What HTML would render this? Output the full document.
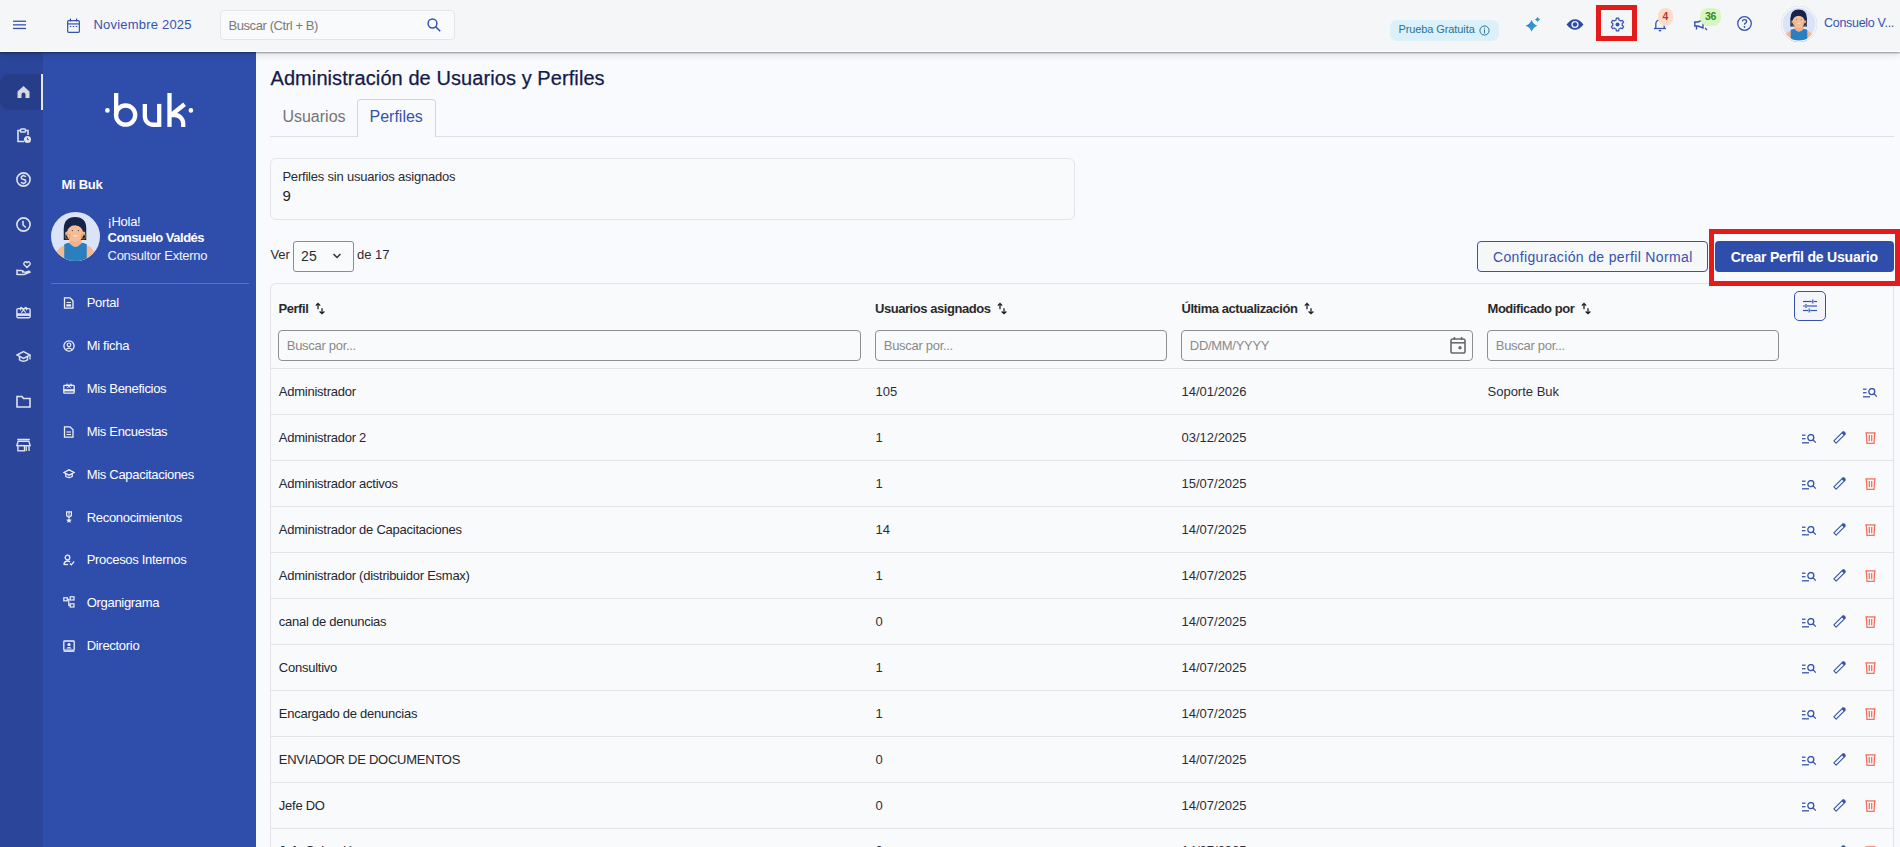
<!DOCTYPE html>
<html><head><meta charset="utf-8">
<style>
*{margin:0;padding:0;box-sizing:border-box}
html,body{width:1900px;height:847px;overflow:hidden;background:#f9fafd;font-family:"Liberation Sans",sans-serif;color:#1f2430}
.abs{position:absolute}
.t{position:absolute;white-space:nowrap;line-height:1}
#top{position:absolute;left:0;top:0;width:1900px;height:52px;background:#f5f6f7;border-bottom:1px solid #fff;box-shadow:0 1px 1.5px rgba(0,0,0,.38),0 3px 7px rgba(0,0,0,.10);z-index:5}
#rail{position:absolute;left:0;top:52px;width:43px;height:795px;background:#2a4599}
#side{position:absolute;left:43px;top:52px;width:213px;height:795px;background:#2f4eab}
#main{position:absolute;left:0;top:0;width:1900px;height:847px;overflow:hidden}
</style></head><body>
<div id="main">
<div class="t" style="left:270.50px;top:67.97px;font-size:20px;color:#141a4a;letter-spacing:0.08px;-webkit-text-stroke:0.25px #141a4a">Administración de Usuarios y Perfiles</div>
<div class="abs" style="left:270px;top:136px;width:1624px;height:1px;background:#dcdfe5"></div>
<div class="abs" style="left:357px;top:99px;width:79px;height:38px;border:1px solid #d3d6dc;border-bottom:none;border-radius:4px 4px 0 0;background:#f9fafc"></div>
<div class="t" style="left:282.40px;top:108.76px;font-size:16px;color:#747474">Usuarios</div>
<div class="t" style="left:369.50px;top:108.76px;font-size:16px;color:#3553ae">Perfiles</div>
<div class="abs" style="left:270px;top:158px;width:805px;height:62px;border:1px solid #e2e4e9;border-radius:6px;background:#f9fafc"></div>
<div class="t" style="left:282.40px;top:170.20px;font-size:13px;color:#2b2b33;letter-spacing:-0.2px">Perfiles sin usuarios asignados</div>
<div class="t" style="left:282.40px;top:187.90px;font-size:15px;color:#222">9</div>
<div class="t" style="left:270.40px;top:248.00px;font-size:13px;color:#2b2b33">Ver</div>
<div class="abs" style="left:293px;top:241px;width:61px;height:31px;border:1px solid #8c8c8c;border-radius:3px;background:#f9fafc"></div>
<div class="t" style="left:301.10px;top:248.95px;font-size:14px;color:#2b2b33">25</div>
<svg class="abs" style="left:332px;top:252px;" width="10" height="8" viewBox="0 0 10 8"><path d="M1.5 2 L5 5.5 L8.5 2" fill="none" stroke="#333" stroke-width="1.5"/></svg>
<div class="t" style="left:357.00px;top:248.00px;font-size:13px;color:#2b2b33">de 17</div>
<div class="abs" style="left:1477px;top:241px;width:231px;height:31px;border:1px solid #3553ae;border-radius:4px;background:#f6f7f9"></div>
<div class="t" style="left:1493.00px;top:249.85px;font-size:14px;color:#3553ae;letter-spacing:0.35px">Configuración de perfil Normal</div>
<div class="abs" style="left:1715px;top:241px;width:179px;height:31px;border-radius:4px;background:#2f4eab"></div>
<div class="t" style="left:1730.70px;top:250.15px;font-size:14px;color:#fff;font-weight:bold;letter-spacing:-0.2px">Crear Perfil de Usuario</div>
<div class="abs" style="left:270px;top:283px;width:1624px;height:600px;border:1px solid #e1e3e8;border-radius:6px;background:#f9fafc"></div>
<div class="t" style="left:278.50px;top:302.00px;font-size:13px;color:#2a2a2e;font-weight:bold;letter-spacing:-0.45px">Perfil</div>
<div class="t" style="left:875.00px;top:302.00px;font-size:13px;color:#2a2a2e;font-weight:bold;letter-spacing:-0.45px">Usuarios asignados</div>
<div class="t" style="left:1181.50px;top:302.00px;font-size:13px;color:#2a2a2e;font-weight:bold;letter-spacing:-0.45px">Última actualización</div>
<div class="t" style="left:1487.50px;top:302.00px;font-size:13px;color:#2a2a2e;font-weight:bold;letter-spacing:-0.45px">Modificado por</div>
<svg class="abs" style="left:315px;top:302px;" width="10" height="13" viewBox="0 0 10 13"><path d="M3 7.3 V1.4 M0.8 3.6 L3 1.4 L5.2 3.6" fill="none" stroke="#222" stroke-width="1.3"/><path d="M7 6.2 V11.6 M4.6 9.4 L7 11.6 L9.4 9.4" fill="none" stroke="#222" stroke-width="1.3"/></svg>
<svg class="abs" style="left:997px;top:302px;" width="10" height="13" viewBox="0 0 10 13"><path d="M3 7.3 V1.4 M0.8 3.6 L3 1.4 L5.2 3.6" fill="none" stroke="#222" stroke-width="1.3"/><path d="M7 6.2 V11.6 M4.6 9.4 L7 11.6 L9.4 9.4" fill="none" stroke="#222" stroke-width="1.3"/></svg>
<svg class="abs" style="left:1304px;top:302px;" width="10" height="13" viewBox="0 0 10 13"><path d="M3 7.3 V1.4 M0.8 3.6 L3 1.4 L5.2 3.6" fill="none" stroke="#222" stroke-width="1.3"/><path d="M7 6.2 V11.6 M4.6 9.4 L7 11.6 L9.4 9.4" fill="none" stroke="#222" stroke-width="1.3"/></svg>
<svg class="abs" style="left:1581px;top:302px;" width="10" height="13" viewBox="0 0 10 13"><path d="M3 7.3 V1.4 M0.8 3.6 L3 1.4 L5.2 3.6" fill="none" stroke="#222" stroke-width="1.3"/><path d="M7 6.2 V11.6 M4.6 9.4 L7 11.6 L9.4 9.4" fill="none" stroke="#222" stroke-width="1.3"/></svg>
<div class="abs" style="left:278px;top:330px;width:583px;height:31px;border:1px solid #8f8f8f;border-radius:4px;background:#f9fafc"></div>
<div class="t" style="left:286.80px;top:339.30px;font-size:13px;color:#8a8a8a;letter-spacing:-0.3px">Buscar por...</div>
<div class="abs" style="left:875px;top:330px;width:292px;height:31px;border:1px solid #8f8f8f;border-radius:4px;background:#f9fafc"></div>
<div class="t" style="left:883.80px;top:339.30px;font-size:13px;color:#8a8a8a;letter-spacing:-0.3px">Buscar por...</div>
<div class="abs" style="left:1181px;top:330px;width:292px;height:31px;border:1px solid #8f8f8f;border-radius:4px;background:#f9fafc"></div>
<div class="t" style="left:1189.80px;top:339.30px;font-size:13px;color:#8a8a8a;letter-spacing:-0.3px">DD/MM/YYYY</div>
<div class="abs" style="left:1487px;top:330px;width:292px;height:31px;border:1px solid #8f8f8f;border-radius:4px;background:#f9fafc"></div>
<div class="t" style="left:1495.80px;top:339.30px;font-size:13px;color:#8a8a8a;letter-spacing:-0.3px">Buscar por...</div>
<svg class="abs" style="left:1450px;top:336px;" width="16" height="18" viewBox="0 0 16 18"><rect x="1" y="3" width="14" height="14" rx="1.8" fill="none" stroke="#6a6a6a" stroke-width="1.6"/><line x1="1" y1="6.8" x2="15" y2="6.8" stroke="#6a6a6a" stroke-width="1.6"/><rect x="3.6" y="1" width="1.6" height="3" fill="#6a6a6a"/><rect x="10.8" y="1" width="1.6" height="3" fill="#6a6a6a"/><circle cx="10" cy="11.7" r="1.7" fill="#6a6a6a"/></svg>
<div class="abs" style="left:1794px;top:291px;width:32px;height:30px;border:1.5px solid #3553ae;border-radius:5px;background:#f4f5f8"></div>
<svg class="abs" style="left:1803px;top:299px;" width="14" height="14" viewBox="0 0 14 14"><g stroke="#3553ae" stroke-width="1.2" fill="none"><line x1="0" y1="2.5" x2="8.8" y2="2.5"/><line x1="10.8" y1="2.5" x2="14" y2="2.5"/><line x1="9.8" y1="0.6" x2="9.8" y2="4.4"/><line x1="0" y1="7" x2="2" y2="7"/><line x1="4" y1="7" x2="14" y2="7"/><line x1="3" y1="5.1" x2="3" y2="8.9"/><line x1="0" y1="11.5" x2="5.2" y2="11.5"/><line x1="7.2" y1="11.5" x2="14" y2="11.5"/><line x1="6.2" y1="9.6" x2="6.2" y2="13.4"/></g></svg>
<div class="abs" style="left:271px;top:368px;width:1622px;height:1px;background:#e3e5ea"></div>
<div class="t" style="left:278.80px;top:385.20px;font-size:13px;color:#25272f;letter-spacing:-0.25px">Administrador</div>
<div class="t" style="left:875.50px;top:385.20px;font-size:13px;color:#2b2d36">105</div>
<div class="t" style="left:1181.50px;top:385.20px;font-size:13px;color:#2b2d36">14/01/2026</div>
<div class="t" style="left:1487.50px;top:385.20px;font-size:13px;color:#2b2d36">Soporte Buk</div>
<div class="abs" style="left:271px;top:414px;width:1622px;height:1px;background:#e3e5ea"></div>
<svg class="abs" style="left:1863px;top:388px;" width="14" height="10" viewBox="0 0 14 10"><g fill="none" stroke="#3553ae" stroke-width="1.3"><line x1="0" y1="1.2" x2="3.5" y2="1.2"/><line x1="0" y1="4.7" x2="3.5" y2="4.7"/><line x1="0" y1="8.8" x2="7" y2="8.8"/><circle cx="8.8" cy="3.6" r="3"/><line x1="11" y1="5.8" x2="13.8" y2="8.6"/></g></svg>
<div class="t" style="left:278.80px;top:431.20px;font-size:13px;color:#25272f;letter-spacing:-0.25px">Administrador 2</div>
<div class="t" style="left:875.50px;top:431.20px;font-size:13px;color:#2b2d36">1</div>
<div class="t" style="left:1181.50px;top:431.20px;font-size:13px;color:#2b2d36">03/12/2025</div>
<div class="abs" style="left:271px;top:460px;width:1622px;height:1px;background:#e3e5ea"></div>
<svg class="abs" style="left:1802px;top:434px;" width="14" height="10" viewBox="0 0 14 10"><g fill="none" stroke="#3553ae" stroke-width="1.3"><line x1="0" y1="1.2" x2="3.5" y2="1.2"/><line x1="0" y1="4.7" x2="3.5" y2="4.7"/><line x1="0" y1="8.8" x2="7" y2="8.8"/><circle cx="8.8" cy="3.6" r="3"/><line x1="11" y1="5.8" x2="13.8" y2="8.6"/></g></svg>
<svg class="abs" style="left:1833px;top:431px;" width="13" height="13" viewBox="0 0 13 13"><path d="M0.87 9.87 L3.13 12.13 L12.13 3.13 L9.87 0.87 Z" fill="none" stroke="#3553ae" stroke-width="1.1" stroke-linejoin="round"/><path d="M8.6 2.1 L10.9 4.4 L12.4 2.9 Q13 2 12.2 1.1 L11.9 0.8 Q11 0 10.1 0.6 Z" fill="#3553ae"/></svg>
<svg class="abs" style="left:1865px;top:432px;" width="11" height="12" viewBox="0 0 11 12"><g fill="none" stroke="#f3705f" stroke-width="1.3"><path d="M0.4 0.9 H10.6"/><path d="M1.3 0.9 L2 11.4 H9 L9.7 0.9"/><line x1="4.3" y1="3" x2="4.3" y2="9.3"/><line x1="6.7" y1="3" x2="6.7" y2="9.3"/></g></svg>
<div class="t" style="left:278.80px;top:477.20px;font-size:13px;color:#25272f;letter-spacing:-0.25px">Administrador activos</div>
<div class="t" style="left:875.50px;top:477.20px;font-size:13px;color:#2b2d36">1</div>
<div class="t" style="left:1181.50px;top:477.20px;font-size:13px;color:#2b2d36">15/07/2025</div>
<div class="abs" style="left:271px;top:506px;width:1622px;height:1px;background:#e3e5ea"></div>
<svg class="abs" style="left:1802px;top:480px;" width="14" height="10" viewBox="0 0 14 10"><g fill="none" stroke="#3553ae" stroke-width="1.3"><line x1="0" y1="1.2" x2="3.5" y2="1.2"/><line x1="0" y1="4.7" x2="3.5" y2="4.7"/><line x1="0" y1="8.8" x2="7" y2="8.8"/><circle cx="8.8" cy="3.6" r="3"/><line x1="11" y1="5.8" x2="13.8" y2="8.6"/></g></svg>
<svg class="abs" style="left:1833px;top:477px;" width="13" height="13" viewBox="0 0 13 13"><path d="M0.87 9.87 L3.13 12.13 L12.13 3.13 L9.87 0.87 Z" fill="none" stroke="#3553ae" stroke-width="1.1" stroke-linejoin="round"/><path d="M8.6 2.1 L10.9 4.4 L12.4 2.9 Q13 2 12.2 1.1 L11.9 0.8 Q11 0 10.1 0.6 Z" fill="#3553ae"/></svg>
<svg class="abs" style="left:1865px;top:478px;" width="11" height="12" viewBox="0 0 11 12"><g fill="none" stroke="#f3705f" stroke-width="1.3"><path d="M0.4 0.9 H10.6"/><path d="M1.3 0.9 L2 11.4 H9 L9.7 0.9"/><line x1="4.3" y1="3" x2="4.3" y2="9.3"/><line x1="6.7" y1="3" x2="6.7" y2="9.3"/></g></svg>
<div class="t" style="left:278.80px;top:523.20px;font-size:13px;color:#25272f;letter-spacing:-0.25px">Administrador de Capacitaciones</div>
<div class="t" style="left:875.50px;top:523.20px;font-size:13px;color:#2b2d36">14</div>
<div class="t" style="left:1181.50px;top:523.20px;font-size:13px;color:#2b2d36">14/07/2025</div>
<div class="abs" style="left:271px;top:552px;width:1622px;height:1px;background:#e3e5ea"></div>
<svg class="abs" style="left:1802px;top:526px;" width="14" height="10" viewBox="0 0 14 10"><g fill="none" stroke="#3553ae" stroke-width="1.3"><line x1="0" y1="1.2" x2="3.5" y2="1.2"/><line x1="0" y1="4.7" x2="3.5" y2="4.7"/><line x1="0" y1="8.8" x2="7" y2="8.8"/><circle cx="8.8" cy="3.6" r="3"/><line x1="11" y1="5.8" x2="13.8" y2="8.6"/></g></svg>
<svg class="abs" style="left:1833px;top:523px;" width="13" height="13" viewBox="0 0 13 13"><path d="M0.87 9.87 L3.13 12.13 L12.13 3.13 L9.87 0.87 Z" fill="none" stroke="#3553ae" stroke-width="1.1" stroke-linejoin="round"/><path d="M8.6 2.1 L10.9 4.4 L12.4 2.9 Q13 2 12.2 1.1 L11.9 0.8 Q11 0 10.1 0.6 Z" fill="#3553ae"/></svg>
<svg class="abs" style="left:1865px;top:524px;" width="11" height="12" viewBox="0 0 11 12"><g fill="none" stroke="#f3705f" stroke-width="1.3"><path d="M0.4 0.9 H10.6"/><path d="M1.3 0.9 L2 11.4 H9 L9.7 0.9"/><line x1="4.3" y1="3" x2="4.3" y2="9.3"/><line x1="6.7" y1="3" x2="6.7" y2="9.3"/></g></svg>
<div class="t" style="left:278.80px;top:569.20px;font-size:13px;color:#25272f;letter-spacing:-0.25px">Administrador (distribuidor Esmax)</div>
<div class="t" style="left:875.50px;top:569.20px;font-size:13px;color:#2b2d36">1</div>
<div class="t" style="left:1181.50px;top:569.20px;font-size:13px;color:#2b2d36">14/07/2025</div>
<div class="abs" style="left:271px;top:598px;width:1622px;height:1px;background:#e3e5ea"></div>
<svg class="abs" style="left:1802px;top:572px;" width="14" height="10" viewBox="0 0 14 10"><g fill="none" stroke="#3553ae" stroke-width="1.3"><line x1="0" y1="1.2" x2="3.5" y2="1.2"/><line x1="0" y1="4.7" x2="3.5" y2="4.7"/><line x1="0" y1="8.8" x2="7" y2="8.8"/><circle cx="8.8" cy="3.6" r="3"/><line x1="11" y1="5.8" x2="13.8" y2="8.6"/></g></svg>
<svg class="abs" style="left:1833px;top:569px;" width="13" height="13" viewBox="0 0 13 13"><path d="M0.87 9.87 L3.13 12.13 L12.13 3.13 L9.87 0.87 Z" fill="none" stroke="#3553ae" stroke-width="1.1" stroke-linejoin="round"/><path d="M8.6 2.1 L10.9 4.4 L12.4 2.9 Q13 2 12.2 1.1 L11.9 0.8 Q11 0 10.1 0.6 Z" fill="#3553ae"/></svg>
<svg class="abs" style="left:1865px;top:570px;" width="11" height="12" viewBox="0 0 11 12"><g fill="none" stroke="#f3705f" stroke-width="1.3"><path d="M0.4 0.9 H10.6"/><path d="M1.3 0.9 L2 11.4 H9 L9.7 0.9"/><line x1="4.3" y1="3" x2="4.3" y2="9.3"/><line x1="6.7" y1="3" x2="6.7" y2="9.3"/></g></svg>
<div class="t" style="left:278.80px;top:615.20px;font-size:13px;color:#25272f;letter-spacing:-0.25px">canal de denuncias</div>
<div class="t" style="left:875.50px;top:615.20px;font-size:13px;color:#2b2d36">0</div>
<div class="t" style="left:1181.50px;top:615.20px;font-size:13px;color:#2b2d36">14/07/2025</div>
<div class="abs" style="left:271px;top:644px;width:1622px;height:1px;background:#e3e5ea"></div>
<svg class="abs" style="left:1802px;top:618px;" width="14" height="10" viewBox="0 0 14 10"><g fill="none" stroke="#3553ae" stroke-width="1.3"><line x1="0" y1="1.2" x2="3.5" y2="1.2"/><line x1="0" y1="4.7" x2="3.5" y2="4.7"/><line x1="0" y1="8.8" x2="7" y2="8.8"/><circle cx="8.8" cy="3.6" r="3"/><line x1="11" y1="5.8" x2="13.8" y2="8.6"/></g></svg>
<svg class="abs" style="left:1833px;top:615px;" width="13" height="13" viewBox="0 0 13 13"><path d="M0.87 9.87 L3.13 12.13 L12.13 3.13 L9.87 0.87 Z" fill="none" stroke="#3553ae" stroke-width="1.1" stroke-linejoin="round"/><path d="M8.6 2.1 L10.9 4.4 L12.4 2.9 Q13 2 12.2 1.1 L11.9 0.8 Q11 0 10.1 0.6 Z" fill="#3553ae"/></svg>
<svg class="abs" style="left:1865px;top:616px;" width="11" height="12" viewBox="0 0 11 12"><g fill="none" stroke="#f3705f" stroke-width="1.3"><path d="M0.4 0.9 H10.6"/><path d="M1.3 0.9 L2 11.4 H9 L9.7 0.9"/><line x1="4.3" y1="3" x2="4.3" y2="9.3"/><line x1="6.7" y1="3" x2="6.7" y2="9.3"/></g></svg>
<div class="t" style="left:278.80px;top:661.20px;font-size:13px;color:#25272f;letter-spacing:-0.25px">Consultivo</div>
<div class="t" style="left:875.50px;top:661.20px;font-size:13px;color:#2b2d36">1</div>
<div class="t" style="left:1181.50px;top:661.20px;font-size:13px;color:#2b2d36">14/07/2025</div>
<div class="abs" style="left:271px;top:690px;width:1622px;height:1px;background:#e3e5ea"></div>
<svg class="abs" style="left:1802px;top:664px;" width="14" height="10" viewBox="0 0 14 10"><g fill="none" stroke="#3553ae" stroke-width="1.3"><line x1="0" y1="1.2" x2="3.5" y2="1.2"/><line x1="0" y1="4.7" x2="3.5" y2="4.7"/><line x1="0" y1="8.8" x2="7" y2="8.8"/><circle cx="8.8" cy="3.6" r="3"/><line x1="11" y1="5.8" x2="13.8" y2="8.6"/></g></svg>
<svg class="abs" style="left:1833px;top:661px;" width="13" height="13" viewBox="0 0 13 13"><path d="M0.87 9.87 L3.13 12.13 L12.13 3.13 L9.87 0.87 Z" fill="none" stroke="#3553ae" stroke-width="1.1" stroke-linejoin="round"/><path d="M8.6 2.1 L10.9 4.4 L12.4 2.9 Q13 2 12.2 1.1 L11.9 0.8 Q11 0 10.1 0.6 Z" fill="#3553ae"/></svg>
<svg class="abs" style="left:1865px;top:662px;" width="11" height="12" viewBox="0 0 11 12"><g fill="none" stroke="#f3705f" stroke-width="1.3"><path d="M0.4 0.9 H10.6"/><path d="M1.3 0.9 L2 11.4 H9 L9.7 0.9"/><line x1="4.3" y1="3" x2="4.3" y2="9.3"/><line x1="6.7" y1="3" x2="6.7" y2="9.3"/></g></svg>
<div class="t" style="left:278.80px;top:707.20px;font-size:13px;color:#25272f;letter-spacing:-0.25px">Encargado de denuncias</div>
<div class="t" style="left:875.50px;top:707.20px;font-size:13px;color:#2b2d36">1</div>
<div class="t" style="left:1181.50px;top:707.20px;font-size:13px;color:#2b2d36">14/07/2025</div>
<div class="abs" style="left:271px;top:736px;width:1622px;height:1px;background:#e3e5ea"></div>
<svg class="abs" style="left:1802px;top:710px;" width="14" height="10" viewBox="0 0 14 10"><g fill="none" stroke="#3553ae" stroke-width="1.3"><line x1="0" y1="1.2" x2="3.5" y2="1.2"/><line x1="0" y1="4.7" x2="3.5" y2="4.7"/><line x1="0" y1="8.8" x2="7" y2="8.8"/><circle cx="8.8" cy="3.6" r="3"/><line x1="11" y1="5.8" x2="13.8" y2="8.6"/></g></svg>
<svg class="abs" style="left:1833px;top:707px;" width="13" height="13" viewBox="0 0 13 13"><path d="M0.87 9.87 L3.13 12.13 L12.13 3.13 L9.87 0.87 Z" fill="none" stroke="#3553ae" stroke-width="1.1" stroke-linejoin="round"/><path d="M8.6 2.1 L10.9 4.4 L12.4 2.9 Q13 2 12.2 1.1 L11.9 0.8 Q11 0 10.1 0.6 Z" fill="#3553ae"/></svg>
<svg class="abs" style="left:1865px;top:708px;" width="11" height="12" viewBox="0 0 11 12"><g fill="none" stroke="#f3705f" stroke-width="1.3"><path d="M0.4 0.9 H10.6"/><path d="M1.3 0.9 L2 11.4 H9 L9.7 0.9"/><line x1="4.3" y1="3" x2="4.3" y2="9.3"/><line x1="6.7" y1="3" x2="6.7" y2="9.3"/></g></svg>
<div class="t" style="left:278.80px;top:753.20px;font-size:13px;color:#25272f;letter-spacing:-0.25px">ENVIADOR DE DOCUMENTOS</div>
<div class="t" style="left:875.50px;top:753.20px;font-size:13px;color:#2b2d36">0</div>
<div class="t" style="left:1181.50px;top:753.20px;font-size:13px;color:#2b2d36">14/07/2025</div>
<div class="abs" style="left:271px;top:782px;width:1622px;height:1px;background:#e3e5ea"></div>
<svg class="abs" style="left:1802px;top:756px;" width="14" height="10" viewBox="0 0 14 10"><g fill="none" stroke="#3553ae" stroke-width="1.3"><line x1="0" y1="1.2" x2="3.5" y2="1.2"/><line x1="0" y1="4.7" x2="3.5" y2="4.7"/><line x1="0" y1="8.8" x2="7" y2="8.8"/><circle cx="8.8" cy="3.6" r="3"/><line x1="11" y1="5.8" x2="13.8" y2="8.6"/></g></svg>
<svg class="abs" style="left:1833px;top:753px;" width="13" height="13" viewBox="0 0 13 13"><path d="M0.87 9.87 L3.13 12.13 L12.13 3.13 L9.87 0.87 Z" fill="none" stroke="#3553ae" stroke-width="1.1" stroke-linejoin="round"/><path d="M8.6 2.1 L10.9 4.4 L12.4 2.9 Q13 2 12.2 1.1 L11.9 0.8 Q11 0 10.1 0.6 Z" fill="#3553ae"/></svg>
<svg class="abs" style="left:1865px;top:754px;" width="11" height="12" viewBox="0 0 11 12"><g fill="none" stroke="#f3705f" stroke-width="1.3"><path d="M0.4 0.9 H10.6"/><path d="M1.3 0.9 L2 11.4 H9 L9.7 0.9"/><line x1="4.3" y1="3" x2="4.3" y2="9.3"/><line x1="6.7" y1="3" x2="6.7" y2="9.3"/></g></svg>
<div class="t" style="left:278.80px;top:799.20px;font-size:13px;color:#25272f;letter-spacing:-0.25px">Jefe DO</div>
<div class="t" style="left:875.50px;top:799.20px;font-size:13px;color:#2b2d36">0</div>
<div class="t" style="left:1181.50px;top:799.20px;font-size:13px;color:#2b2d36">14/07/2025</div>
<div class="abs" style="left:271px;top:828px;width:1622px;height:1px;background:#e3e5ea"></div>
<svg class="abs" style="left:1802px;top:802px;" width="14" height="10" viewBox="0 0 14 10"><g fill="none" stroke="#3553ae" stroke-width="1.3"><line x1="0" y1="1.2" x2="3.5" y2="1.2"/><line x1="0" y1="4.7" x2="3.5" y2="4.7"/><line x1="0" y1="8.8" x2="7" y2="8.8"/><circle cx="8.8" cy="3.6" r="3"/><line x1="11" y1="5.8" x2="13.8" y2="8.6"/></g></svg>
<svg class="abs" style="left:1833px;top:799px;" width="13" height="13" viewBox="0 0 13 13"><path d="M0.87 9.87 L3.13 12.13 L12.13 3.13 L9.87 0.87 Z" fill="none" stroke="#3553ae" stroke-width="1.1" stroke-linejoin="round"/><path d="M8.6 2.1 L10.9 4.4 L12.4 2.9 Q13 2 12.2 1.1 L11.9 0.8 Q11 0 10.1 0.6 Z" fill="#3553ae"/></svg>
<svg class="abs" style="left:1865px;top:800px;" width="11" height="12" viewBox="0 0 11 12"><g fill="none" stroke="#f3705f" stroke-width="1.3"><path d="M0.4 0.9 H10.6"/><path d="M1.3 0.9 L2 11.4 H9 L9.7 0.9"/><line x1="4.3" y1="3" x2="4.3" y2="9.3"/><line x1="6.7" y1="3" x2="6.7" y2="9.3"/></g></svg>
<div class="t" style="left:278.80px;top:843.70px;font-size:13px;color:#25272f;letter-spacing:-0.25px">Jefe Selección</div>
<div class="t" style="left:875.50px;top:843.70px;font-size:13px;color:#2b2d36">0</div>
<div class="t" style="left:1181.50px;top:843.70px;font-size:13px;color:#2b2d36">14/07/2025</div>
<svg class="abs" style="left:1802px;top:848px;" width="14" height="10" viewBox="0 0 14 10"><g fill="none" stroke="#3553ae" stroke-width="1.3"><line x1="0" y1="1.2" x2="3.5" y2="1.2"/><line x1="0" y1="4.7" x2="3.5" y2="4.7"/><line x1="0" y1="8.8" x2="7" y2="8.8"/><circle cx="8.8" cy="3.6" r="3"/><line x1="11" y1="5.8" x2="13.8" y2="8.6"/></g></svg>
<svg class="abs" style="left:1833px;top:845px;" width="13" height="13" viewBox="0 0 13 13"><path d="M0.87 9.87 L3.13 12.13 L12.13 3.13 L9.87 0.87 Z" fill="none" stroke="#3553ae" stroke-width="1.1" stroke-linejoin="round"/><path d="M8.6 2.1 L10.9 4.4 L12.4 2.9 Q13 2 12.2 1.1 L11.9 0.8 Q11 0 10.1 0.6 Z" fill="#3553ae"/></svg>
<svg class="abs" style="left:1865px;top:846px;" width="11" height="12" viewBox="0 0 11 12"><g fill="none" stroke="#f3705f" stroke-width="1.3"><path d="M0.4 0.9 H10.6"/><path d="M1.3 0.9 L2 11.4 H9 L9.7 0.9"/><line x1="4.3" y1="3" x2="4.3" y2="9.3"/><line x1="6.7" y1="3" x2="6.7" y2="9.3"/></g></svg>
<div class="abs" style="left:1709px;top:229px;width:191px;height:57px;border:5px solid #e41b1b;border-right-width:5px"></div>
</div>
<div id="rail"></div>
<div id="side"></div>
<div id="sb" style="position:absolute;left:0;top:0">
<svg class="abs" style="left:100px;top:85px;" width="100" height="50" viewBox="0 0 100 50"><g fill="none" stroke="#fff" stroke-width="4.3"><path d="M16.15 8 V30.1"/><circle cx="25.6" cy="30.1" r="9.6"/><path d="M44.85 18.9 V31.2 A8.4 8.4 0 0 0 53.25 39.75 H59.2"/><path d="M59.2 18.9 V41.9"/><path d="M69.5 8 V41.9"/><path d="M70.5 30.5 L84.6 19.2"/><path d="M70 30 H74.6 A8.6 8.6 0 0 1 83.2 38.6 V41.9"/></g><circle cx="7.4" cy="25.4" r="2.3" fill="#fff"/><circle cx="90.9" cy="25.4" r="2.3" fill="#fff"/></svg>
<div class="t" style="left:61.50px;top:178.00px;font-size:13px;color:#fff;font-weight:bold;letter-spacing:-0.3px">Mi Buk</div>
<svg class="abs" style="left:51px;top:212px;" width="49" height="49" viewBox="0 0 100 100"><defs><clipPath id="c51"><circle cx="50" cy="50" r="50"/></clipPath></defs><g clip-path="url(#c51)"><rect width="100" height="100" fill="#dbe3f8"/><path d="M8 100 Q10 72 28 68 L72 68 Q90 72 92 100 Z" fill="#f3b994"/><rect x="38" y="52" width="24" height="18" fill="#f0b28c"/><path d="M27 100 L27 66 Q32 64 37 63 Q50 80 63 63 Q68 64 73 66 L73 100 Z" fill="#2a7fc2"/><path d="M26 57 L26 34 Q27 10 49 10 Q72 10 72 34 L72 57 Z" fill="#172448"/><ellipse cx="49" cy="44" rx="17" ry="17" fill="#f4bd98"/><ellipse cx="32" cy="44" rx="3" ry="4" fill="#f0b28c"/><ellipse cx="67" cy="44" rx="3" ry="4" fill="#f0b28c"/><path d="M30 34 Q36 24 48 26 Q60 28 68 34 L68 24 Q60 14 48 14 Q34 16 30 26 Z" fill="#172448"/><path d="M45 48 Q50 52 55 48 Z" fill="#fff"/><circle cx="43.5" cy="38" r="1.3" fill="#2f4a45"/><circle cx="56" cy="38" r="1.3" fill="#2f4a45"/><circle cx="34" cy="50" r="4.8" fill="none" stroke="#c9962e" stroke-width="1.3"/><circle cx="66" cy="50" r="4.8" fill="none" stroke="#c9962e" stroke-width="1.3"/></g></svg>
<div class="t" style="left:107.50px;top:214.50px;font-size:13px;color:#fff;letter-spacing:-0.3px">¡Hola!</div>
<div class="t" style="left:107.50px;top:231.00px;font-size:13px;color:#fff;font-weight:bold;letter-spacing:-0.5px">Consuelo Valdés</div>
<div class="t" style="left:107.50px;top:249.00px;font-size:13px;color:#f0f2fa;letter-spacing:-0.25px">Consultor Externo</div>
<div class="abs" style="left:51px;top:283px;width:198px;height:1px;background:#5a72bf"></div>
<div class="t" style="left:86.70px;top:296.30px;font-size:13px;color:#fff;letter-spacing:-0.3px">Portal</div>
<div class="t" style="left:86.70px;top:339.20px;font-size:13px;color:#fff;letter-spacing:-0.3px">Mi ficha</div>
<div class="t" style="left:86.70px;top:382.00px;font-size:13px;color:#fff;letter-spacing:-0.3px">Mis Beneficios</div>
<div class="t" style="left:86.70px;top:425.10px;font-size:13px;color:#fff;letter-spacing:-0.3px">Mis Encuestas</div>
<div class="t" style="left:86.70px;top:467.90px;font-size:13px;color:#fff;letter-spacing:-0.3px">Mis Capacitaciones</div>
<div class="t" style="left:86.70px;top:510.90px;font-size:13px;color:#fff;letter-spacing:-0.3px">Reconocimientos</div>
<div class="t" style="left:86.70px;top:553.00px;font-size:13px;color:#fff;letter-spacing:-0.3px">Procesos Internos</div>
<div class="t" style="left:86.70px;top:596.00px;font-size:13px;color:#fff;letter-spacing:-0.3px">Organigrama</div>
<div class="t" style="left:86.70px;top:639.20px;font-size:13px;color:#fff;letter-spacing:-0.3px">Directorio</div>
<svg class="abs" style="left:62.5px;top:297px;" width="12" height="12" viewBox="0 0 12 12"><path d="M1.5 0.8 H7 L10 3.8 V11.2 H1.5 Z" fill="none" stroke="#eef0f8" stroke-width="1.3"/><line x1="3.5" y1="5.5" x2="8" y2="5.5" stroke="#eef0f8" stroke-width="1.1"/><rect x="3.3" y="7.3" width="4.8" height="2.2" fill="#eef0f8"/></svg>
<svg class="abs" style="left:62.5px;top:340px;" width="12" height="12" viewBox="0 0 12 12"><circle cx="6" cy="6" r="5.1" fill="none" stroke="#eef0f8" stroke-width="1.3"/><circle cx="6" cy="4.8" r="1.8" fill="none" stroke="#eef0f8" stroke-width="1.2"/><path d="M2.8 9.6 Q6 6.8 9.2 9.6" fill="none" stroke="#eef0f8" stroke-width="1.2"/></svg>
<svg class="abs" style="left:62.5px;top:382px;" width="12" height="12" viewBox="0 0 12 12"><g fill="none" stroke="#eef0f8"><rect x="0.8" y="3.4" width="10.4" height="7.8" rx="0.8" stroke-width="1.3"/><path d="M6 4.6 C4.8 0.8 2.6 1.4 3.6 4.4 M6 4.6 C7.2 0.8 9.4 1.4 8.4 4.4 M6 4.2 L4.2 6.2 M6 4.2 L7.8 6.2" stroke-width="1"/></g><rect x="0.8" y="7.2" width="10.4" height="2.2" fill="#eef0f8"/></svg>
<svg class="abs" style="left:62.5px;top:426px;" width="12" height="12" viewBox="0 0 12 12"><path d="M1.5 0.8 H7 L10 3.8 V11.2 H1.5 Z" fill="none" stroke="#eef0f8" stroke-width="1.3"/><line x1="3.5" y1="6" x2="8" y2="6" stroke="#eef0f8" stroke-width="1.1"/><line x1="3.5" y1="8.5" x2="8" y2="8.5" stroke="#eef0f8" stroke-width="1.1"/></svg>
<svg class="abs" style="left:62.5px;top:468px;" width="12" height="12" viewBox="0 0 12 12"><path d="M0.8 4.5 L6 1.8 L11.2 4.5 L6 7.2 Z" fill="none" stroke="#eef0f8" stroke-width="1.3"/><path d="M2.8 5.8 V8.5 Q6 10.5 9.2 8.5 V5.8" fill="none" stroke="#eef0f8" stroke-width="1.3"/></svg>
<svg class="abs" style="left:62.5px;top:511px;" width="12" height="12" viewBox="0 0 12 12"><path d="M3.6 0.8 H8.4 V4.6 L6 6.4 L3.6 4.6 Z" fill="none" stroke="#eef0f8" stroke-width="1.2"/><line x1="6" y1="0.8" x2="6" y2="5.5" stroke="#eef0f8" stroke-width="1"/><path d="M6 6.8 L6.9 8.6 L8.8 8.8 L7.4 10 L7.8 11.8 L6 10.9 L4.2 11.8 L4.6 10 L3.2 8.8 L5.1 8.6 Z" fill="#eef0f8"/></svg>
<svg class="abs" style="left:62.5px;top:554px;" width="12" height="12" viewBox="0 0 12 12"><circle cx="4.5" cy="3.5" r="2.3" fill="none" stroke="#eef0f8" stroke-width="1.3"/><path d="M0.8 10.5 Q1.5 7 4.5 7 Q6 7 7 8" fill="none" stroke="#eef0f8" stroke-width="1.3"/><line x1="0.8" y1="10.5" x2="5" y2="10.5" stroke="#eef0f8" stroke-width="1.3"/><path d="M7 9.5 L8.3 10.8 L11.2 7.5" fill="none" stroke="#eef0f8" stroke-width="1.2"/></svg>
<svg class="abs" style="left:62.5px;top:596px;" width="12" height="12" viewBox="0 0 12 12"><rect x="0.8" y="1.8" width="3.5" height="3" fill="none" stroke="#eef0f8" stroke-width="1.2"/><rect x="7.2" y="0.8" width="3.8" height="3.2" fill="none" stroke="#eef0f8" stroke-width="1.2"/><rect x="7.2" y="7.8" width="3.8" height="3.2" fill="none" stroke="#eef0f8" stroke-width="1.2"/><path d="M4.3 3.3 H5.8 V9.4 H7.2" fill="none" stroke="#eef0f8" stroke-width="1.2"/></svg>
<svg class="abs" style="left:62.5px;top:640px;" width="12" height="12" viewBox="0 0 12 12"><rect x="0.8" y="1" width="10.4" height="9.2" rx="0.8" fill="none" stroke="#eef0f8" stroke-width="1.3"/><circle cx="6" cy="4.5" r="1.6" fill="#eef0f8"/><path d="M3.3 8.4 Q6 5.8 8.7 8.4" fill="#eef0f8"/><line x1="0.5" y1="11.3" x2="11.5" y2="11.3" stroke="#eef0f8" stroke-width="1.1"/></svg>
<div class="abs" style="left:0px;top:74px;width:41px;height:36px;background:#263d8a;border-radius:9px 0 0 9px"></div>
<div class="abs" style="left:41px;top:74px;width:2px;height:36px;background:#e8e6e0"></div>
<svg class="abs" style="left:16px;top:85px;" width="15" height="14" viewBox="0 0 15 14"><path d="M1.5 6.5 L7.5 1 L13.5 6.5 V13 H9.5 V9.5 A2 2 0 0 0 5.5 9.5 V13 H1.5 Z" fill="#d8d8dc"/></svg>
<svg class="abs" style="left:16px;top:128px;" width="15" height="15" viewBox="0 0 15 15"><path d="M4 2.5 H2 V13.5 H8" fill="none" stroke="#dfe2ec" stroke-width="1.6"/><path d="M10 2.5 H12 V7" fill="none" stroke="#dfe2ec" stroke-width="1.6"/><rect x="4.5" y="1" width="5" height="3" rx="0.8" fill="none" stroke="#dfe2ec" stroke-width="1.5"/><circle cx="11.5" cy="11.5" r="3.5" fill="#dfe2ec"/><path d="M11.5 9.8 V11.6 H12.8" stroke="#2a4599" stroke-width="0.9" fill="none"/></svg>
<svg class="abs" style="left:16px;top:172px;" width="15" height="15" viewBox="0 0 15 15"><circle cx="7.5" cy="7.5" r="6.6" fill="none" stroke="#dfe2ec" stroke-width="1.6"/><path d="M9.8 5 Q9.4 3.8 7.5 3.8 Q5.2 3.8 5.2 5.6 Q5.2 7.2 7.5 7.5 Q9.8 7.8 9.8 9.5 Q9.8 11.2 7.5 11.2 Q5.5 11.2 5.1 10" fill="none" stroke="#dfe2ec" stroke-width="1.4"/><line x1="7.5" y1="2.6" x2="7.5" y2="3.8" stroke="#dfe2ec" stroke-width="1.4"/><line x1="7.5" y1="11.2" x2="7.5" y2="12.4" stroke="#dfe2ec" stroke-width="1.4"/></svg>
<svg class="abs" style="left:16px;top:217px;" width="15" height="15" viewBox="0 0 15 15"><circle cx="7.5" cy="7.5" r="6.6" fill="none" stroke="#dfe2ec" stroke-width="1.6"/><path d="M7 3.8 V8 L9.8 10.5" fill="none" stroke="#dfe2ec" stroke-width="1.6"/></svg>
<svg class="abs" style="left:16px;top:261px;" width="15" height="15" viewBox="0 0 15 15"><path d="M1 8.5 V14 M1 9.5 H5 Q7 9.5 8 11 H6 M1 13.5 H8 L14 11 Q13.5 10 12 10.5 L9 11.5" fill="none" stroke="#dfe2ec" stroke-width="1.5"/><path d="M11 6.5 L8.2 3.8 A1.6 1.6 0 0 1 11 1.6 A1.6 1.6 0 0 1 13.8 3.8 Z" fill="none" stroke="#dfe2ec" stroke-width="1.4"/></svg>
<svg class="abs" style="left:16px;top:305px;" width="15" height="15" viewBox="0 0 15 15"><g fill="none" stroke="#dfe2ec"><rect x="0.9" y="3.6" width="13.2" height="9.2" rx="1.2" stroke-width="1.4"/><path d="M7.5 5.6 C6 0.8 3.2 1.6 4.6 5.4 M7.5 5.6 C9 0.8 11.8 1.6 10.4 5.4 M7.5 5.2 L5.2 7.6 M7.5 5.2 L9.8 7.6" stroke-width="1.1"/></g><rect x="0.9" y="8.3" width="13.2" height="2.6" fill="#dfe2ec"/></svg>
<svg class="abs" style="left:16px;top:350px;" width="15" height="15" viewBox="0 0 15 15"><path d="M1 5 L7.5 1.5 L14 5 L7.5 8.5 Z" fill="none" stroke="#dfe2ec" stroke-width="1.5"/><path d="M3.5 6.5 V9.8 Q7.5 12.5 11.5 9.8 V6.5" fill="none" stroke="#dfe2ec" stroke-width="1.5"/><line x1="14" y1="5" x2="14" y2="9.5" stroke="#dfe2ec" stroke-width="1.3"/></svg>
<svg class="abs" style="left:16px;top:395px;" width="15" height="15" viewBox="0 0 15 15"><path d="M1 1.5 H6 L7.5 3.5 H14 V12 H1 Z" fill="none" stroke="#dfe2ec" stroke-width="1.6"/></svg>
<svg class="abs" style="left:16px;top:438px;" width="15" height="15" viewBox="0 0 15 15"><g fill="none" stroke="#dfe2ec"><path d="M1.2 1.5 H13.8" stroke-width="1.5"/><path d="M2.2 3.2 H12.8 L14.2 7.6 H0.8 Z" stroke-width="1.4"/><rect x="1.9" y="7.6" width="6.6" height="5.2" stroke-width="1.4"/><path d="M10.2 13 V7.6 H13 V13" stroke-width="1.4"/></g></svg>
</div>
<div id="top">
<svg class="abs" style="left:13px;top:20px;" width="13" height="10" viewBox="0 0 13 10"><g fill="#3553ae"><rect x="0" y="0.6" width="13" height="1.3"/><rect x="0" y="4.2" width="13" height="1.3"/><rect x="0" y="7.8" width="13" height="1.3"/></g></svg>
<svg class="abs" style="left:66.5px;top:17.5px;" width="13" height="15" viewBox="0 0 14 16"><g fill="none" stroke="#3553ae" stroke-width="1.3"><rect x="0.7" y="2.7" width="12.6" height="12.6" rx="1"/><line x1="0.7" y1="6.3" x2="13.3" y2="6.3"/></g><g fill="#3553ae"><rect x="3" y="0.5" width="1.3" height="3.2"/><rect x="9.7" y="0.5" width="1.3" height="3.2"/><rect x="3" y="8.5" width="1.6" height="1.2"/><rect x="6.2" y="8.5" width="1.6" height="1.2"/><rect x="9.4" y="8.5" width="1.6" height="1.2"/></g></svg>
<div class="t" style="left:93.50px;top:18.00px;font-size:13px;color:#3553ae;letter-spacing:0.2px">Noviembre 2025</div>
<div class="abs" style="left:220px;top:10px;width:235px;height:30px;border:1px solid #e3e5ea;border-radius:4px;background:#f9fafb"></div>
<div class="t" style="left:228.40px;top:19.00px;font-size:13px;color:#7a7a7a;letter-spacing:-0.4px">Buscar (Ctrl + B)</div>
<svg class="abs" style="left:427px;top:18px;" width="14" height="14" viewBox="0 0 14 14"><circle cx="5.5" cy="5.5" r="4.4" fill="none" stroke="#3553ae" stroke-width="1.5"/><line x1="8.7" y1="8.7" x2="13.2" y2="13.2" stroke="#3553ae" stroke-width="1.6"/></svg>
<div class="abs" style="left:1390px;top:20px;width:109px;height:21px;background:#dcf0fa;border-radius:7px"></div>
<div class="t" style="left:1398.50px;top:23.89px;font-size:11px;color:#2a7396;letter-spacing:-0.1px">Prueba Gratuita</div>
<svg class="abs" style="left:1479px;top:25px;" width="11" height="11" viewBox="0 0 11 11"><circle cx="5.5" cy="5.5" r="4.6" fill="none" stroke="#2a7396" stroke-width="1"/><rect x="5" y="4.5" width="1" height="3.8" fill="#2a7396"/><rect x="5" y="2.6" width="1" height="1" fill="#2a7396"/></svg>
<svg class="abs" style="left:1524px;top:16px;" width="18" height="18" viewBox="0 0 18 18"><defs><linearGradient id="sg" x1="0" y1="0" x2="1" y2="0.3"><stop offset="0" stop-color="#1f63f2"/><stop offset="0.5" stop-color="#3590e0"/><stop offset="1" stop-color="#2aa98a"/></linearGradient></defs><path d="M7.6 3.7 Q9.1 8.2 13.4 9.7 Q9.1 11.2 7.6 15.8 Q6.1 11.2 1.8 9.7 Q6.1 8.2 7.6 3.7 Z" fill="url(#sg)"/><path d="M13.6 0.9 Q14.5 2.5 16.2 3.4 Q14.5 4.3 13.6 6 Q12.7 4.3 11 3.4 Q12.7 2.5 13.6 0.9 Z" fill="url(#sg)"/></svg>
<svg class="abs" style="left:1566px;top:18px;" width="18" height="13" viewBox="0 0 18 13"><path d="M0.5 6.5 Q9 -4 17.5 6.5 Q9 17 0.5 6.5 Z" fill="#2c4aa5"/><circle cx="9" cy="6.5" r="3.6" fill="#f4f5f8"/><circle cx="9" cy="6.5" r="2.2" fill="#2c4aa5"/></svg>
<div class="abs" style="left:1596px;top:5px;width:41px;height:36px;border:5px solid #e41b1b"></div>
<svg class="abs" style="left:1610px;top:17px;" width="15" height="15" viewBox="0 0 24 24"><path d="M8.67 5.17 L9.78 4.73 L10.03 1.89 L13.97 1.89 L14.22 4.73 L15.33 5.17 L16.25 5.70 L17.18 6.44 L19.77 5.24 L21.74 8.65 L19.41 10.29 L19.58 11.47 L19.58 12.53 L19.41 13.71 L21.74 15.35 L19.77 18.76 L17.18 17.56 L16.25 18.30 L15.33 18.83 L14.22 19.27 L13.97 22.11 L10.03 22.11 L9.78 19.27 L8.67 18.83 L7.75 18.30 L6.82 17.56 L4.23 18.76 L2.26 15.35 L4.59 13.71 L4.42 12.53 L4.42 11.47 L4.59 10.29 L2.26 8.65 L4.23 5.24 L6.82 6.44 L7.75 5.70 Z" fill="none" stroke="#3553ae" stroke-width="2" stroke-linejoin="round"/><circle cx="12" cy="12" r="3.2" fill="#3553ae"/></svg>
<svg class="abs" style="left:1653px;top:17px;" width="14" height="15" viewBox="0 0 14 15"><path d="M2.8 11.5 V7 A4.2 4.2 0 0 1 11.2 7 V11.5" fill="none" stroke="#3553ae" stroke-width="1.3"/><line x1="1" y1="11.5" x2="13" y2="11.5" stroke="#3553ae" stroke-width="1.3"/><path d="M5.8 13.6 H8.2" stroke="#3553ae" stroke-width="1.5"/></svg>
<div class="abs" style="left:1658px;top:8px;width:15px;height:18px;background:#fcdccb;border-radius:8px"></div>
<div class="t" style="left:1662.50px;top:10.91px;font-size:10.5px;color:#c0312f;font-weight:bold">4</div>
<svg class="abs" style="left:1694px;top:19px;" width="14" height="12" viewBox="0 0 14 12"><path d="M0.8 3 H4 L9 0.8 V9 L4 7 H0.8 Z" fill="none" stroke="#3553ae" stroke-width="1.4"/><path d="M2.5 7 V10.5" stroke="#3553ae" stroke-width="1.4"/><path d="M11 9 L13 11" stroke="#3553ae" stroke-width="1.2"/></svg>
<div class="abs" style="left:1700px;top:8px;width:21px;height:18px;background:#d9f5c4;border-radius:8px"></div>
<div class="t" style="left:1705.00px;top:10.91px;font-size:10.5px;color:#2d8a1c;font-weight:bold;letter-spacing:-0.3px">36</div>
<svg class="abs" style="left:1737px;top:16px;" width="15" height="15" viewBox="0 0 15 15"><circle cx="7.5" cy="7.5" r="6.8" fill="none" stroke="#3553ae" stroke-width="1.3"/><path d="M5.4 5.6 Q5.4 3.6 7.5 3.6 Q9.6 3.6 9.6 5.4 Q9.6 6.6 8.3 7.2 Q7.5 7.6 7.5 8.8" fill="none" stroke="#3553ae" stroke-width="1.3"/><circle cx="7.5" cy="11" r="0.9" fill="#3553ae"/></svg>
<svg class="abs" style="left:1781px;top:6px;" width="36" height="36" viewBox="0 0 100 100"><defs><clipPath id="c1781"><circle cx="50" cy="50" r="50"/></clipPath></defs><g clip-path="url(#c1781)"><rect width="100" height="100" fill="#dbe3f8"/><path d="M8 100 Q10 72 28 68 L72 68 Q90 72 92 100 Z" fill="#f3b994"/><rect x="38" y="52" width="24" height="18" fill="#f0b28c"/><path d="M27 100 L27 66 Q32 64 37 63 Q50 80 63 63 Q68 64 73 66 L73 100 Z" fill="#2a7fc2"/><path d="M26 57 L26 34 Q27 10 49 10 Q72 10 72 34 L72 57 Z" fill="#172448"/><ellipse cx="49" cy="44" rx="17" ry="17" fill="#f4bd98"/><ellipse cx="32" cy="44" rx="3" ry="4" fill="#f0b28c"/><ellipse cx="67" cy="44" rx="3" ry="4" fill="#f0b28c"/><path d="M30 34 Q36 24 48 26 Q60 28 68 34 L68 24 Q60 14 48 14 Q34 16 30 26 Z" fill="#172448"/><path d="M45 48 Q50 52 55 48 Z" fill="#fff"/><circle cx="43.5" cy="38" r="1.3" fill="#2f4a45"/><circle cx="56" cy="38" r="1.3" fill="#2f4a45"/><circle cx="34" cy="50" r="4.8" fill="none" stroke="#c9962e" stroke-width="1.3"/><circle cx="66" cy="50" r="4.8" fill="none" stroke="#c9962e" stroke-width="1.3"/></g><circle cx="50" cy="50" r="48" fill="none" stroke="#fff" stroke-width="4"/><circle cx="50" cy="50" r="49.5" fill="none" stroke="#c8cad0" stroke-width="1.2"/></svg>
<div class="t" style="left:1824.00px;top:17.42px;font-size:12.5px;color:#3553ae;letter-spacing:-0.3px">Consuelo V...</div>
</div>
</body></html>
